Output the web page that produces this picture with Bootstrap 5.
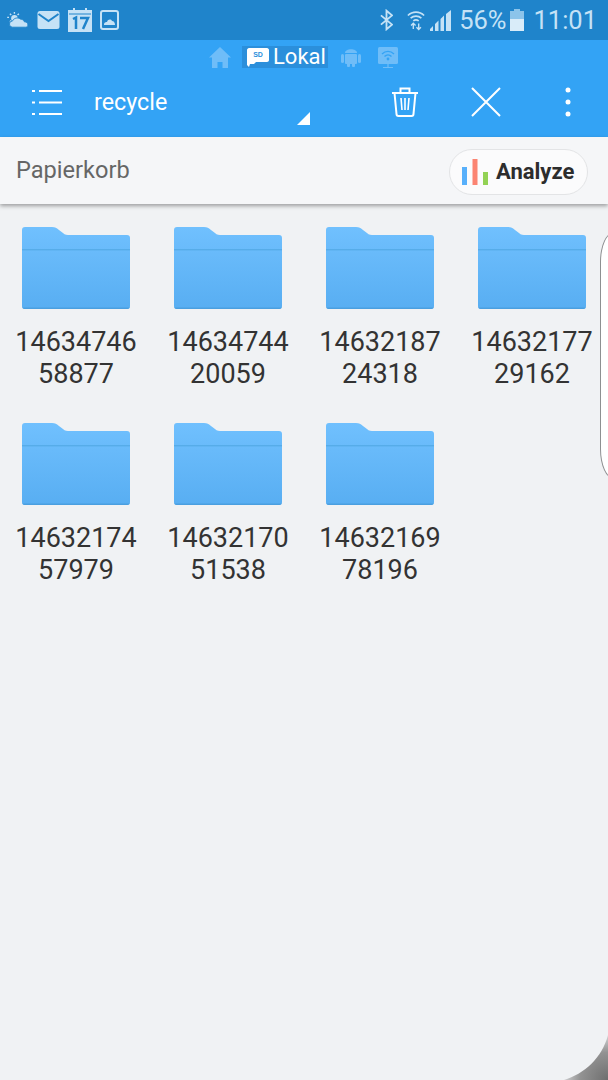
<!DOCTYPE html>
<html lang="de">
<head>
  <meta charset="UTF-8">
  <meta name="viewport" content="width=device-width, initial-scale=1.0">
  <title>Papierkorb</title>
  <link href="https://cdn.jsdelivr.net/npm/bootstrap@5.3.0/dist/css/bootstrap.min.css" rel="stylesheet">
  <style>
    body {
      font-family: Roboto, "Liberation Sans", sans-serif;
      background: #f0f2f4;
      overflow: hidden;
    }
    .screen {
      width: 608px;
      height: 1080px;
      overflow: hidden;
      background: #f0f2f4;
    }
    .status-bar {
      height: 40px;
      background: #1f84cb;
      color: #c5e2f6;
      padding: 0 11px 0 7px;
    }
    .status-text {
      font-size: 25.5px;
      line-height: 40px;
    }
    .st-bt { margin-right: 14px; }
    .st-wifi { margin-right: 5px; }
    .st-signal { margin-right: 8px; }
    .st-batt { margin: 0 9px 0 4px; }
    .app-head {
      height: 97px;
      background: #33a3f5;
      color: #fff;
    }
    .tab-row {
      height: 34px;
      padding-left: 209px;
    }
    .tab-active {
      background: #2b8fdb;
      height: 22px;
      width: 86px;
      margin: 0 13px 0 11px;
      font-size: 22px;
      line-height: 22px;
      padding-left: 5px;
    }
    .tab-android { margin-right: 17px; }
    .tool-row {
      height: 63px;
      position: relative;
      padding-bottom: 6px;
    }
    .menu-btn {
      width: 94px;
      padding-left: 32px;
    }
    .dir-name {
      width: 190px;
      font-size: 23.3px;
      line-height: 1;
    }
    .drop-mark {
      position: absolute;
      left: 297px;
      top: 38px;
    }
    .tool-trash {
      position: absolute;
      left: 391px;
      top: 13px;
    }
    .tool-close {
      position: absolute;
      left: 471px;
      top: 13px;
    }
    .tool-more {
      position: absolute;
      left: 565px;
      top: 13px;
    }
    .path-bar {
      height: 67px;
      background: #f5f6f8;
      padding: 0 20px 0 16px;
      box-shadow: 0 2px 4px rgba(0, 0, 0, .35);
    }
    .path-name {
      color: #666;
      font-size: 23.6px;
    }
    .analyze-btn {
      height: 46px;
      width: 139px;
      border: 1px solid #e3e4e6;
      border-radius: 23px;
      background: #fbfbfc;
      color: #2d2d2d;
      font-size: 22px;
      font-weight: 700;
      gap: 8px;
      padding-left: 12px;
      margin-top: 2px;
    }
    .file-grid {
      display: grid;
      grid-template-columns: repeat(4, 152px);
      grid-auto-rows: 196px;
      padding-top: 23px;
    }
    .folder-cell {
      color: #333;
      font-size: 27px;
      line-height: 31.5px;
      text-align: center;
    }
    .folder-cell svg {
      display: block;
      margin: 0 auto 18px;
    }
    .edge-handle {
      position: absolute;
      left: 600px;
      top: 232px;
      width: 30px;
      height: 247px;
      background: #fff;
      border: 1.5px solid #8d8f91;
      border-radius: 14px / 30px;
    }
    .edge-corner {
      position: absolute;
      right: 0;
      bottom: 0;
      width: 66px;
      height: 60px;
    }
    .sd-label {
      font-family: "Liberation Sans", sans-serif;
      font-size: 7px;
      font-weight: 700;
    }
  </style>
</head>
<body>
  <div class="screen position-relative">
    <svg width="0" height="0" class="position-absolute">
      <defs>
        <linearGradient id="folderFill" x1="0" y1="0" x2="0" y2="1">
          <stop offset="0" stop-color="#70c0fe"/>
          <stop offset="1" stop-color="#58aef2"/>
        </linearGradient>
        <symbol id="folderIcon" viewBox="0 0 108 82">
          <path d="M3 0H30C33 0 35 1 37 3L41 6C43 8 45 8 48 8H105C107 8 108 9 108 11V79C108 81 107 82 105 82H3C1 82 0 81 0 79V3C0 1 1 0 3 0Z" fill="url(#folderFill)"/>
          <rect y="22" width="108" height="1.4" fill="#56ace9"/>
          <path d="M0 79C0 81 1 82 3 82H105C107 82 108 81 108 79V80.5H0Z" fill="#4a9fe0"/>
        </symbol>
      </defs>
    </svg>

    <div class="status-bar d-flex align-items-center">
      <svg width="22" height="18" viewBox="0 0 24 20" class="me-2" fill="#c5e2f6">
        <circle cx="8" cy="8" r="3.6"/>
        <path d="M8 1v2M2 7H0M3 3l1.500 1.500M13 3l-1.500 1.500M3 12l1.500-1.500" stroke="#c5e2f6" stroke-width="1.500"/>
        <path d="M6 18a3.500 3.500 0 0 1 0-7c1-3 6-4.500 8.500-2 3 0 4.500 2 4.500 3 3 0 4 1.500 4 3.500 0 1.500-1 2.500-2.500 2.500Z" stroke="#1f84cb"/>
      </svg>
      <svg width="23" height="18" viewBox="0 0 22 18" class="me-2">
        <rect width="22" height="18" rx="2.500" fill="#c5e2f6"/>
        <path d="M1 3l10 7 10-7" fill="none" stroke="#1f84cb" stroke-width="2"/>
      </svg>
      <svg width="24" height="24" viewBox="0 0 24 24" class="me-2">
        <rect y="2" width="24" height="22" fill="#c5e2f6"/>
        <path d="M6 0v5M18 0v5" stroke="#c5e2f6" stroke-width="2"/>
        <path d="M1 6h22" stroke="#1f84cb" stroke-width="1"/>
        <path d="M5 11l3-1.500V21M12 10h8l-5 11" fill="none" stroke="#1f84cb" stroke-width="2.500"/>
      </svg>
      <svg width="19" height="20" viewBox="0 0 19 20" fill="none">
        <rect x="1" y="1" width="17" height="18" rx="2" stroke="#c5e2f6" stroke-width="2"/>
        <path d="M4 15c0-3 2-3 3-3 1-3 4-3 5-1 2 0 3 2 3 4Z" fill="#c5e2f6"/>
      </svg>
      <div class="ms-auto d-flex align-items-center">
        <svg width="13" height="22" viewBox="0 0 14 22" fill="none" stroke="#c5e2f6" stroke-width="2" class="st-bt">
          <path d="M1 6l12 10-6 5V1l6 5L1 16"/>
        </svg>
        <svg width="18" height="22" viewBox="0 0 20 22" fill="none" stroke="#c5e2f6" stroke-width="1.800" class="st-wifi">
          <path d="M1 6c5-5 13-5 18 0M4 9c3.500-3 8.500-3 12 0M7 12c2-1.500 4-1.500 6 0"/>
          <path d="M7 21v-6M4.500 17l2.500-2.500L9.500 17M13 15v6M10.500 19l2.500 2.500 2.500-2.500" stroke-width="1.500"/>
        </svg>
        <svg width="21" height="21" viewBox="0 0 21 21" fill="#c5e2f6" class="st-signal">
          <path d="M0 21v-2l3-3v5ZM5 21v-7l3.500-3.500V21ZM10.500 21V9L14 5.500V21ZM16 21V4l5-4v21Z"/>
        </svg>
        <span class="status-text">56%</span>
        <svg width="14" height="22" viewBox="0 0 14 22" class="st-batt">
          <rect x="4" width="6" height="2" fill="#8cc4ea"/>
          <rect y="2" width="14" height="8" fill="#8cc4ea"/>
          <rect y="10" width="14" height="12" fill="#d9ecf9"/>
        </svg>
        <span class="status-text">11:01</span>
      </div>
    </div>

    <div class="app-head">
      <div class="tab-row d-flex align-items-center">
        <svg width="22" height="21" viewBox="0 0 22 21" fill="#6fbdf8">
          <path d="M11 0L0 10.500h3V21h5.500v-6h5v6H19V10.500h3Z"/>
        </svg>
        <div class="tab-active d-flex align-items-center">
          <svg width="22" height="19" viewBox="0 0 22 19" class="me-1">
            <path d="M2 0H20C21 0 22 1 22 2V12C22 13 21 14 20 14H9L7 16H3L2 19L0 17V2C0 1 1 0 2 0Z" fill="#fff"/>
            <text x="11" y="8.500" text-anchor="middle" fill="#2b8fdb" class="sd-label">SD</text>
          </svg>
          <span>Lokal</span>
        </div>
        <svg width="20" height="20" viewBox="0 0 20 20" fill="#6fbdf8" class="tab-android">
          <rect x="4" y="7" width="12" height="10" rx="1"/>
          <rect x="0" y="7" width="3" height="9" rx="1.500"/>
          <rect x="17" y="7" width="3" height="9" rx="1.500"/>
          <path d="M4 6c0-5 12-5 12 0Z"/>
          <rect x="6" y="16" width="3" height="4" rx="1"/>
          <rect x="11" y="16" width="3" height="4" rx="1"/>
        </svg>
        <svg width="20" height="21" viewBox="0 0 20 21">
          <rect width="20" height="17" rx="1.500" fill="#6fbdf8"/>
          <path d="M4 7c3.500-3.500 8.500-3.500 12 0M6.500 9.500c2-2 5-2 7 0" fill="none" stroke="#33a3f5" stroke-width="1.400"/>
          <circle cx="10" cy="12" r="1.400" fill="#33a3f5"/>
          <path d="M10 17v3M5 20.500h10" stroke="#6fbdf8" stroke-width="1.200"/>
        </svg>
      </div>
      <div class="tool-row d-flex align-items-center">
        <div class="menu-btn">
          <svg width="31" height="25" viewBox="0 0 31 25" fill="#fff" class="d-block">
            <rect y="0" width="3" height="2"/><rect x="7" y="0" width="23" height="2"/>
            <rect y="11.500" width="3" height="2"/><rect x="7" y="11.500" width="23" height="2"/>
            <rect y="23" width="3" height="2"/><rect x="7" y="23" width="23" height="2"/>
          </svg>
        </div>
        <div class="dir-name">recycle</div>
        <svg class="drop-mark" width="13" height="13" viewBox="0 0 13 13"><path d="M13 0V13H0Z" fill="#fff"/></svg>
        <svg class="tool-trash" width="28" height="30" viewBox="0 0 28 30" fill="none" stroke="#fff" stroke-width="2">
          <path d="M1 6h26M9.500 6V1.500h9V6M3.500 6l2 21c0 1 1 2 2 2h13c1 0 2-1 2-2l2-21"/>
          <path d="M10 11l1 12M14 11v12M18 11l-1 12" stroke-width="1.600"/>
        </svg>
        <svg class="tool-close" width="30" height="30" viewBox="0 0 30 30" stroke="#fff" stroke-width="2">
          <path d="M1 1l28 28M29 1L1 29"/>
        </svg>
        <svg class="tool-more" width="6" height="30" viewBox="0 0 6 30" fill="#fff">
          <circle cx="3" cy="3" r="2.500"/><circle cx="3" cy="15" r="2.500"/><circle cx="3" cy="27" r="2.500"/>
        </svg>
      </div>
    </div>

    <div class="path-bar d-flex align-items-center justify-content-between position-relative">
      <span class="path-name">Papierkorb</span>
      <div class="analyze-btn d-flex align-items-center">
        <svg width="26" height="26" viewBox="0 0 26 26">
          <rect y="8" width="5" height="18" fill="#58b0fb"/>
          <rect x="10.500" width="5" height="26" fill="#fb8472"/>
          <rect x="21" y="13" width="5" height="13" fill="#93d255"/>
        </svg>
        <span>Analyze</span>
      </div>
    </div>

    <div class="file-grid">
      <div class="folder-cell"><svg width="108" height="82"><use href="#folderIcon"/></svg>14634746<br>58877</div>
      <div class="folder-cell"><svg width="108" height="82"><use href="#folderIcon"/></svg>14634744<br>20059</div>
      <div class="folder-cell"><svg width="108" height="82"><use href="#folderIcon"/></svg>14632187<br>24318</div>
      <div class="folder-cell"><svg width="108" height="82"><use href="#folderIcon"/></svg>14632177<br>29162</div>
      <div class="folder-cell"><svg width="108" height="82"><use href="#folderIcon"/></svg>14632174<br>57979</div>
      <div class="folder-cell"><svg width="108" height="82"><use href="#folderIcon"/></svg>14632170<br>51538</div>
      <div class="folder-cell"><svg width="108" height="82"><use href="#folderIcon"/></svg>14632169<br>78196</div>
    </div>

    <div class="edge-handle"></div>
    <svg class="edge-corner" viewBox="0 0 66 60">
      <defs>
        <radialGradient id="cornerFill" gradientUnits="userSpaceOnUse" cx="66" cy="60" r="46">
          <stop offset="0" stop-color="#6e6e6e"/>
          <stop offset="0.6" stop-color="#929292"/>
          <stop offset="1" stop-color="#d5d6d7"/>
        </radialGradient>
      </defs>
      <path d="M66 15C60 38 42 54 22 60H66Z" fill="url(#cornerFill)"/>
    </svg>
  </div>
  <script src="https://cdn.jsdelivr.net/npm/bootstrap@5.3.0/dist/js/bootstrap.bundle.min.js"></script>
</body>
</html>
